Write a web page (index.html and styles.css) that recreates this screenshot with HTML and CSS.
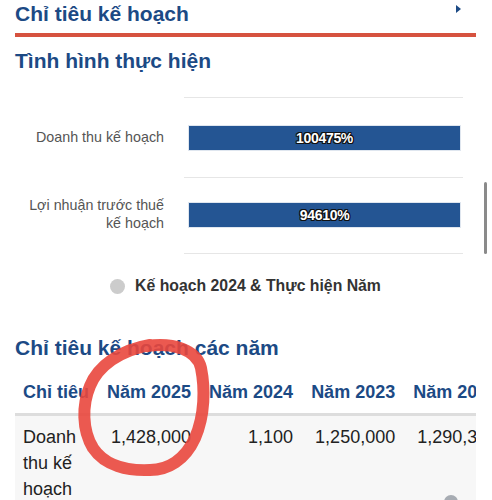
FILE: index.html
```html
<!DOCTYPE html>
<html lang="vi">
<head>
<meta charset="utf-8">
<title>Chỉ tiêu kế hoạch</title>
<link rel="stylesheet" href="styles.css">
</head>
<body>
<div class="page">
  <div class="sec-head">
    <h2 class="title">Chỉ tiêu kế hoạch</h2>
    <span class="caret"></span>
  </div>

  <h2 class="title t2">Tình hình thực hiện</h2>

  <div class="chart">
    <div class="band band-a">
      <div class="lbl">Doanh thu kế hoạch</div>
      <div class="plot"><div class="bar"><span class="val">100475%</span></div></div>
    </div>
    <div class="band band-b">
      <div class="lbl">Lợi nhuận trước thuế<br>kế hoạch</div>
      <div class="plot"><div class="bar"><span class="val">94610%</span></div></div>
    </div>
  </div>

  <div class="legend"><span class="dot"></span><span>Kế hoạch 2024 &amp; Thực hiện Năm</span></div>

  <h2 class="title t3">Chỉ tiêu kế hoạch các năm</h2>

  <div class="table-wrap">
    <table class="plan">
      <thead>
        <tr>
          <th class="c-name">Chỉ tiêu</th>
          <th>Năm 2025</th>
          <th>Năm 2024</th>
          <th>Năm 2023</th>
          <th>Năm 2022</th>
        </tr>
      </thead>
      <tbody>
        <tr>
          <td class="c-name">Doanh thu kế hoạch</td>
          <td>1,428,000</td>
          <td>1,100</td>
          <td>1,250,000</td>
          <td>1,290,300</td>
        </tr>
      </tbody>
    </table>
  </div>
</div>

<svg class="annot" width="492" height="500" viewBox="0 0 492 500" aria-hidden="true">
  <path d="M147,346 C173,342 197,350 201,368 C205,388 205,415 195,438 C185,460 168,470 150,470 C128,471 105,466 93,448 C82,430 82,405 90,386 C98,366 120,350 150,345" fill="none" stroke="#e9473d" stroke-width="12" stroke-linecap="round" stroke-linejoin="round" opacity="0.9"/>
</svg>
<div class="scroll-thumb"></div>
<div class="peek-icon"></div>
</body>
</html>
```

FILE: styles.css
```css
* { box-sizing: border-box; }

html, body {
  margin: 0;
  padding: 0;
  background: #ffffff;
}

body {
  font-family: "Liberation Sans", Arial, Helvetica, sans-serif;
  color: #222;
  width: 492px;
  height: 500px;
  overflow: hidden;
  position: relative;
}

.page {
  padding: 0 16px 0 15px;
}

.sec-head {
  display: flex;
  justify-content: space-between;
  align-items: flex-start;
  padding-top: 1px;
  padding-bottom: 6px;
  border-bottom: 4px solid #d6523f;
}

.title {
  margin: 0;
  font-size: 21px;
  line-height: 26px;
  font-weight: bold;
  color: #1c4a85;
}

.caret {
  width: 0;
  height: 0;
  margin-top: 4px;
  margin-right: 15px;
  border-left: 5px solid #1c4a85;
  border-top: 4.5px solid transparent;
  border-bottom: 4.5px solid transparent;
}

.t2 { margin-top: 11px; }

.chart {
  margin-top: 23px;
}

.band {
  display: flex;
  align-items: stretch;
}

.band-a { height: 80px; }
.band-b { height: 77px; }

.lbl {
  width: 169px;
  padding-right: 20px;
  text-align: right;
  font-size: 14.3px;
  line-height: 18px;
  color: #555;
  display: flex;
  flex-direction: column;
  justify-content: center;
  align-items: flex-end;
}

.band-b .lbl { padding-bottom: 4px; }

.plot {
  width: 279px;
  border-top: 1px solid #e6e6e6;
  padding: 0 2px 0 4px;
  display: flex;
  align-items: center;
}

.band-b .plot {
  border-bottom: 1px solid #e6e6e6;
  padding-bottom: 1px;
}

.bar {
  width: 100%;
  height: 26px;
  background: #245593;
  border: 1px solid #dfe6ef;
  display: flex;
  align-items: center;
  justify-content: center;
}

.val {
  color: #fff;
  font-weight: bold;
  font-size: 14px;
  letter-spacing: -0.3px;
  text-shadow:
    1px 0 0 #111, -1px 0 0 #111, 0 1px 0 #111, 0 -1px 0 #111,
    1px 1px 0 #111, -1px -1px 0 #111, 1px -1px 0 #111, -1px 1px 0 #111;
}

.legend {
  margin-top: 22px;
  display: flex;
  justify-content: center;
  align-items: center;
  gap: 10px;
  font-size: 15.8px;
  line-height: 20px;
  font-weight: bold;
  color: #333;
}

.dot {
  width: 15px;
  height: 15px;
  border-radius: 50%;
  background: #cccccc;
}

.t3 { margin-top: 39px; }

.table-wrap {
  margin-top: 10px;
  width: 461px;
  overflow: hidden;
}

.plan {
  border-collapse: collapse;
  font-size: 18px;
}

.plan th {
  padding: 10px 8px 10px 10px;
  line-height: 22px;
  font-weight: bold;
  color: #1c4a85;
  text-align: right;
  white-space: nowrap;
  background: #fff;
  border-bottom: 3px solid #dddddd;
}

.plan td {
  padding: 8px 8px 8px 10px;
  line-height: 26px;
  text-align: right;
  vertical-align: top;
  white-space: nowrap;
  color: #222;
  background: #f7f7f7;
}

.plan .c-name {
  text-align: left;
  padding-left: 8px;
  width: 82px;
  white-space: normal;
}

.plan th.c-name { white-space: nowrap; }

.plan td.c-name { max-width: 82px; }

.annot {
  position: absolute;
  left: 0;
  top: 0;
  pointer-events: none;
}

.scroll-thumb {
  position: absolute;
  left: 484px;
  top: 182px;
  width: 3px;
  height: 72px;
  border-radius: 2px;
  background: #8a8a8a;
}

.peek-icon {
  position: absolute;
  left: 444px;
  top: 495px;
  width: 14px;
  height: 14px;
  border-radius: 50%;
  background: #a7acb3;
}
```
